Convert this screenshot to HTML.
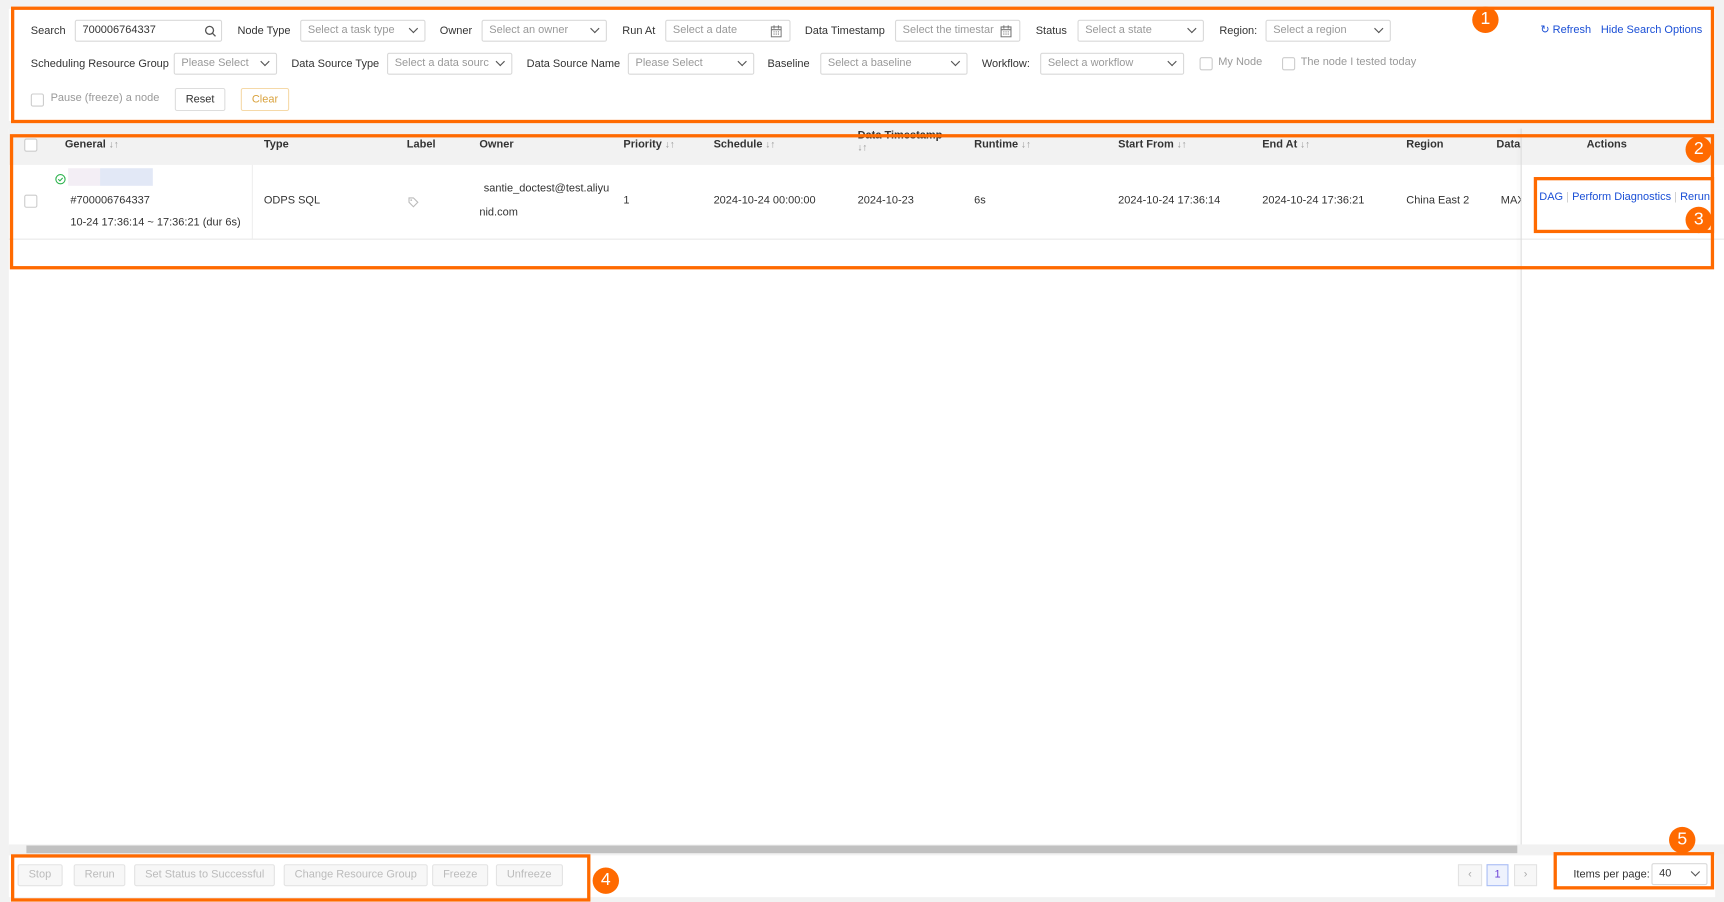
<!DOCTYPE html>
<html><head><meta charset="utf-8"><style>
*{box-sizing:border-box;margin:0;padding:0}
html,body{width:1724px;height:902px;overflow:hidden;background:#f2f2f2}
#w{position:absolute;left:0;top:0;width:1568px;height:820px;transform:scale(1.09949);transform-origin:0 0;font-family:"Liberation Sans",Arial,sans-serif;font-size:10px;color:#333;background:#f2f2f2}
.a{position:absolute;white-space:nowrap}
.in{position:absolute;height:20px;border:1px solid #d9d9d9;border-radius:2px;background:#fff;color:#999;padding:3px 6px;font-size:10px;overflow:hidden;white-space:nowrap}
.in .ch{position:absolute;right:7px;top:4px;width:6px;height:6px;border-right:1.3px solid #555;border-bottom:1.3px solid #555;transform:rotate(45deg)}
.cb{position:absolute;width:12px;height:12px;border:1px solid #ccc;border-radius:2px;background:#fff}
.ob{position:absolute;border:3px solid #ff6a00}
.num{position:absolute;width:24px;height:24px;border-radius:12px;background:#ff6a00;color:#fff;font-size:16px;text-align:center;line-height:24px}
.th{position:absolute;top:126px;font-weight:bold;font-size:10px;color:#333}
.td{position:absolute;top:177px;font-size:10px;color:#333}
.bt{position:absolute;top:786px;height:20px;border:1px solid #e3e3e3;border-radius:2px;background:#f7f7f7;color:#bbb;font-size:10px;line-height:18px;padding:0 9px}
.s{color:#999;font-size:9px;font-weight:normal}
.lk{color:#1a4fd6}
</style></head><body><div id="w">
<!-- filter panel -->
<div class="a" style="left:8px;top:8px;width:1552px;height:102px;background:#fff"></div>
<div class="a" style="left:28px;top:23px">Search</div>
<div class="in" style="left:68px;top:18px;width:134px;color:#333">700006764337<svg style="position:absolute;right:4px;top:4px" width="11" height="11" viewBox="0 0 11 11"><circle cx="4.6" cy="4.6" r="3.6" fill="none" stroke="#555" stroke-width="1.2"/><path d="M7.3 7.3L10 10" stroke="#555" stroke-width="1.2"/></svg></div>
<div class="a" style="left:216px;top:23px">Node Type</div>
<div class="in" style="left:273px;top:18px;width:114px">Select a task type<span class="ch"></span></div>
<div class="a" style="left:400px;top:23px">Owner</div>
<div class="in" style="left:438px;top:18px;width:114px">Select an owner<span class="ch"></span></div>
<div class="a" style="left:566px;top:23px">Run At</div>
<div class="in" style="left:605px;top:18px;width:114px">Select a date<svg style="position:absolute;right:7px;top:4px" width="10" height="11" viewBox="0 0 10 11"><rect x="0.5" y="1.5" width="9" height="9" fill="none" stroke="#777"/><path d="M0.5 4h9M3 0v3M7 0v3M2.5 6h1M4.5 6h1M6.5 6h1M2.5 8h1M4.5 8h1M6.5 8h1" stroke="#777"/></svg></div>
<div class="a" style="left:732px;top:23px">Data Timestamp</div>
<div class="in" style="left:814px;top:18px;width:114px">Select the timestar<svg style="position:absolute;right:7px;top:4px;background:#fff" width="10" height="11" viewBox="0 0 10 11"><rect x="0.5" y="1.5" width="9" height="9" fill="none" stroke="#777"/><path d="M0.5 4h9M3 0v3M7 0v3M2.5 6h1M4.5 6h1M6.5 6h1M2.5 8h1M4.5 8h1M6.5 8h1" stroke="#777"/></svg></div>
<div class="a" style="left:942px;top:23px">Status</div>
<div class="in" style="left:980px;top:18px;width:115px">Select a state<span class="ch"></span></div>
<div class="a" style="left:1109px;top:23px">Region:</div>
<div class="in" style="left:1151px;top:18px;width:114px">Select a region<span class="ch"></span></div>
<div class="a lk" style="left:1401px;top:22px">&#x21BB; Refresh</div>
<div class="a lk" style="left:1456px;top:22px">Hide Search Options</div>

<div class="a" style="left:28px;top:53px">Scheduling Resource Group</div>
<div class="in" style="left:158px;top:48px;width:94px">Please Select<span class="ch"></span></div>
<div class="a" style="left:265px;top:53px">Data Source Type</div>
<div class="in" style="left:352px;top:48px;width:114px">Select a data sourc<span class="ch" style="background:#fff"></span></div>
<div class="a" style="left:479px;top:53px">Data Source Name</div>
<div class="in" style="left:571px;top:48px;width:115px">Please Select<span class="ch"></span></div>
<div class="a" style="left:698px;top:53px">Baseline</div>
<div class="in" style="left:746px;top:48px;width:134px">Select a baseline<span class="ch"></span></div>
<div class="a" style="left:893px;top:53px">Workflow:</div>
<div class="in" style="left:946px;top:48px;width:131px">Select a workflow<span class="ch"></span></div>
<div class="cb" style="left:1091px;top:52px"></div><div class="a" style="left:1108px;top:51px;color:#999">My Node</div>
<div class="cb" style="left:1166px;top:52px"></div><div class="a" style="left:1183px;top:51px;color:#999">The node I tested today</div>

<div class="cb" style="left:28px;top:85px"></div><div class="a" style="left:46px;top:84px;color:#999">Pause (freeze) a node</div>
<div class="a" style="left:159px;top:80px;width:46px;height:21px;border:1px solid #ddd;border-radius:2px;background:#fff;text-align:center;line-height:19px">Reset</div>
<div class="a" style="left:219px;top:80px;width:44px;height:21px;border:1px solid #f5d9a8;border-radius:2px;background:#fff;text-align:center;line-height:19px;color:#d9a23d">Clear</div>

<!-- table -->
<div class="a" style="left:8px;top:117px;width:1560px;height:653px;background:#fff"></div>
<div class="a" style="left:8px;top:117px;width:1560px;height:33px;background:#f2f2f2"></div>
<div class="a" style="left:8px;top:217px;width:1560px;height:1px;background:#e8e8e8"></div>
<div class="a" style="left:1383px;top:117px;width:1px;height:653px;background:#ddd;box-shadow:-2px 0 3px rgba(0,0,0,.06)"></div>
<div class="cb" style="left:22px;top:126px"></div>
<div class="th" style="left:59px">General <span class="s">&#8595;&#8593;</span></div>
<div class="th" style="left:240px">Type</div>
<div class="th" style="left:370px">Label</div>
<div class="th" style="left:436px">Owner</div>
<div class="th" style="left:567px">Priority <span class="s">&#8595;&#8593;</span></div>
<div class="th" style="left:649px">Schedule <span class="s">&#8595;&#8593;</span></div>
<div class="th" style="left:780px;top:118px">Data Timestamp<br><span class="s">&#8595;&#8593;</span></div>
<div class="th" style="left:886px">Runtime <span class="s">&#8595;&#8593;</span></div>
<div class="th" style="left:1017px">Start From <span class="s">&#8595;&#8593;</span></div>
<div class="th" style="left:1148px">End At <span class="s">&#8595;&#8593;</span></div>
<div class="th" style="left:1279px">Region</div>
<div class="th" style="left:1361px">Data</div>
<div class="th" style="left:1443px">Actions</div>

<div class="a" style="left:229px;top:150px;width:1px;height:67px;background:#eee"></div>
<div class="cb" style="left:22px;top:177px"></div>
<svg class="a" style="left:50px;top:158px" width="10" height="10" viewBox="0 0 10 10"><circle cx="5" cy="5" r="4.2" fill="none" stroke="#2bb24c" stroke-width="1"/><path d="M3 5l1.5 1.5L7 3.8" fill="none" stroke="#2bb24c" stroke-width="1"/></svg>
<div class="a" style="left:62px;top:153px;width:29px;height:16px;background:#f3eef5"></div>
<div class="a" style="left:91px;top:153px;width:48px;height:16px;background:#e2e8f6"></div>
<div class="td" style="left:64px">#700006764337</div>
<div class="td" style="left:64px;top:197px">10-24 17:36:14 ~ 17:36:21 (dur 6s)</div>
<div class="td" style="left:240px">ODPS SQL</div>
<svg class="a" style="left:371px;top:179px" width="10" height="10" viewBox="0 0 10 10"><path d="M1 1h4l4 4-4 4-4-4z" fill="none" stroke="#bbb"/><circle cx="3" cy="3" r=".8" fill="#bbb"/></svg>
<div class="td" style="left:440px;top:166px">santie_doctest@test.aliyu</div>
<div class="td" style="left:436px;top:188px">nid.com</div>
<div class="td" style="left:567px">1</div>
<div class="td" style="left:649px">2024-10-24 00:00:00</div>
<div class="td" style="left:780px">2024-10-23</div>
<div class="td" style="left:886px">6s</div>
<div class="td" style="left:1017px">2024-10-24 17:36:14</div>
<div class="td" style="left:1148px">2024-10-24 17:36:21</div>
<div class="td" style="left:1279px">China East 2</div>
<div class="td" style="left:1365px;width:18px;overflow:hidden">MAX</div>
<div class="td lk" style="left:1400px;top:174px">DAG <span style="color:#ccc">|</span> Perform Diagnostics <span style="color:#ccc">|</span> Rerun</div>

<!-- scrollbar -->
<div class="a" style="left:8px;top:768px;width:1560px;height:9px;background:#f1f1f1"></div>
<div class="a" style="left:24px;top:769px;width:1356px;height:7px;background:#c1c1c1"></div>

<!-- bottom -->
<div class="a" style="left:8px;top:778px;width:1552px;height:38px;background:#fff"></div>
<div class="bt" style="left:16px">Stop</div>
<div class="bt" style="left:67px">Rerun</div>
<div class="bt" style="left:122px">Set Status to Successful</div>
<div class="bt" style="left:258px">Change Resource Group</div>
<div class="bt" style="left:393px">Freeze</div>
<div class="bt" style="left:451px">Unfreeze</div>
<div class="a" style="left:1326px;top:786px;width:22px;height:20px;border:1px solid #e3e3e3;background:#f7f7f7;color:#aaa;text-align:center;line-height:18px">&#8249;</div>
<div class="a" style="left:1352px;top:786px;width:20px;height:20px;border:1px solid #a9bdf5;background:#eef2fd;color:#6b3fd6;text-align:center;line-height:18px">1</div>
<div class="a" style="left:1377px;top:786px;width:21px;height:20px;border:1px solid #e3e3e3;background:#f7f7f7;color:#aaa;text-align:center;line-height:18px">&#8250;</div>
<div class="a" style="left:1431px;top:790px">Items per page:</div>
<div class="in" style="left:1502px;top:785px;width:51px;color:#333">40<span class="ch"></span></div>

<!-- annotations -->
<div class="ob" style="left:10px;top:6px;width:1549px;height:106px"></div>
<div class="ob" style="left:9px;top:122px;width:1550px;height:123px"></div>
<div class="ob" style="left:1395px;top:161px;width:164px;height:51px"></div>
<div class="ob" style="left:10px;top:777px;width:527px;height:43px"></div>
<div class="ob" style="left:1413px;top:775px;width:146px;height:34px"></div>
<div class="num" style="left:1339px;top:6px">1</div>
<div class="num" style="left:1533px;top:124px">2</div>
<div class="num" style="left:1533px;top:188px">3</div>
<div class="num" style="left:539px;top:789px">4</div>
<div class="num" style="left:1518px;top:752px">5</div>
</div></body></html>
